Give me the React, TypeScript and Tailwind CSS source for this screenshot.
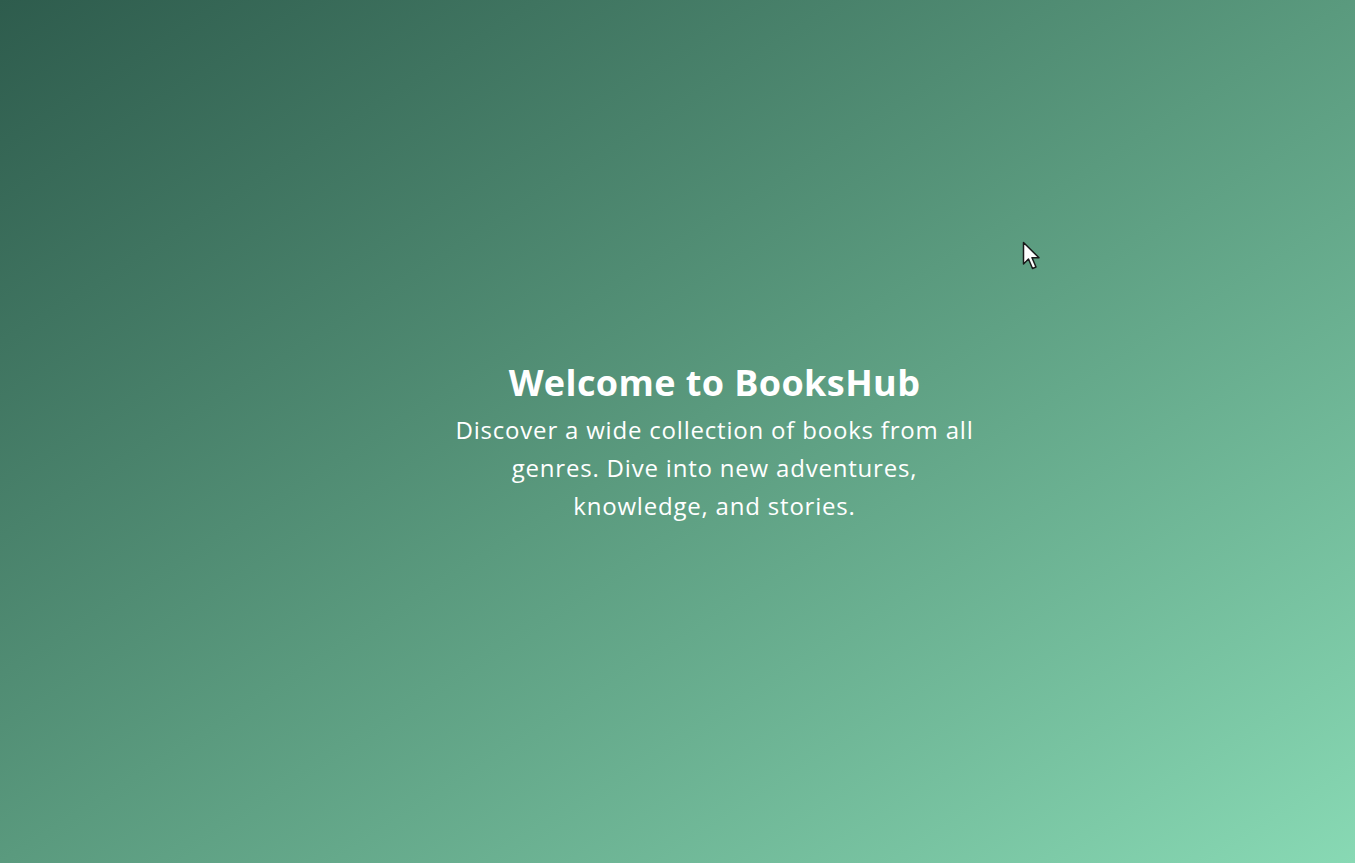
import React from 'react';

const Cursor = () => (
  <svg width="22" height="30" viewBox="0 0 22 30" className="absolute left-[1022px] top-[241px]">
    <path
      d="M1.5 1.5 L1.5 23 L6.5 18 L10.5 27.5 L14 26 L10 16.8 L17 16.8 Z"
      fill="#ffffff"
      stroke="#1a1a1a"
      strokeWidth="1.5"
      strokeLinejoin="round"
    />
  </svg>
);

const App = () => {
  return (
    <div className="relative min-h-screen w-full overflow-hidden bg-gradient-to-br from-[#2e5c4d] via-[#5a9a7e] to-[#88d9b4] font-['Open_Sans',sans-serif]">
      <div className="flex min-h-screen items-center justify-center pl-[74px] pt-[24px]">
        <div className="flex flex-col items-center text-center text-white">
          <h1 className="text-[36px] font-bold leading-[1.2] tracking-[0.4px]">Welcome to BooksHub</h1>
          <p className="mt-[6px] max-w-[526px] text-[24px] leading-[1.6] tracking-[0.8px]">
            Discover a wide collection of books from all genres. Dive into new adventures, knowledge, and stories.
          </p>
        </div>
      </div>
      <Cursor />
    </div>
  );
};

export default App;
